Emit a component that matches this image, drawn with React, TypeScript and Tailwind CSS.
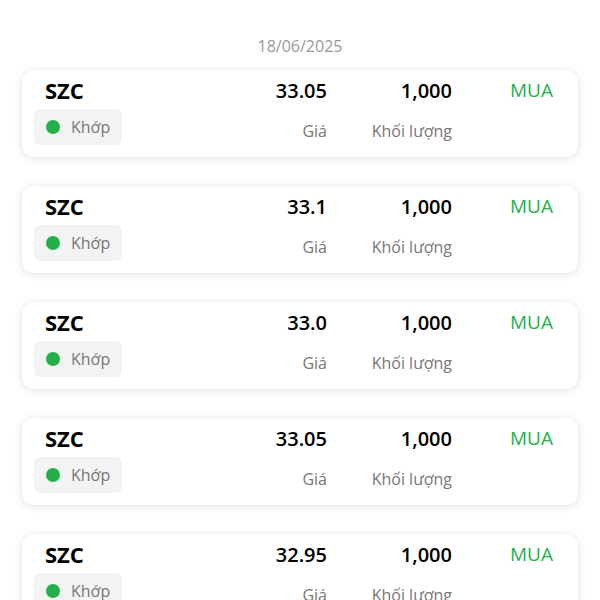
const ORDERS = [
  { symbol: "SZC", price: "33.05", volume: "1,000" },
  { symbol: "SZC", price: "33.1", volume: "1,000" },
  { symbol: "SZC", price: "33.0", volume: "1,000" },
  { symbol: "SZC", price: "33.05", volume: "1,000" },
  { symbol: "SZC", price: "32.95", volume: "1,000" },
];

function OrderCard({ symbol, price, volume }: { symbol: string; price: string; volume: string }) {
  return (
    <div className="h-[87px] shrink-0 rounded-xl bg-white pl-3 pr-[25px] pt-[7px] shadow-[0_1px_8px_rgba(0,0,0,0.13)]">
      <div className="grid grid-cols-[193px_100px_125px_101px] grid-rows-[28px_36px] gap-y-1">
        <div className="ml-[11px] flex items-center pb-[3px] text-[22px] font-bold leading-7 text-black">{symbol}</div>
        <div className="flex items-center justify-end text-[20px] font-semibold text-black">{price}</div>
        <div className="flex items-center justify-end text-[20px] font-semibold text-black">{volume}</div>
        <div className="flex items-center justify-end pb-[1px] text-[19px] text-[#22b04b]">MUA</div>
        <div className="flex">
          <div className="flex h-9 w-[88px] items-center gap-[11px] rounded-md bg-[#f3f3f3] pl-[12px]">
            <span className="h-[14px] w-[14px] rounded-full bg-[#22b04b]" />
            <span className="text-[16px] text-[#777]">Khớp</span>
          </div>
        </div>
        <div className="flex items-center justify-end pt-[8px] text-[16px] text-[#777]">Giá</div>
        <div className="flex items-center justify-end pt-[8px] text-[16px] text-[#777]">Khối lượng</div>
        <div />
      </div>
    </div>
  );
}

export default function App() {
  return (
    <div className="h-[600px] overflow-hidden bg-white px-[22px] font-['Open_Sans',sans-serif]">
      <div className="pt-[34px] text-center text-[16px] leading-6 text-[#999]">18/06/2025</div>
      <div className="mt-[12px] flex flex-col gap-[29px]">
        {ORDERS.map((o, i) => (
          <OrderCard key={i} {...o} />
        ))}
      </div>
    </div>
  );
}
